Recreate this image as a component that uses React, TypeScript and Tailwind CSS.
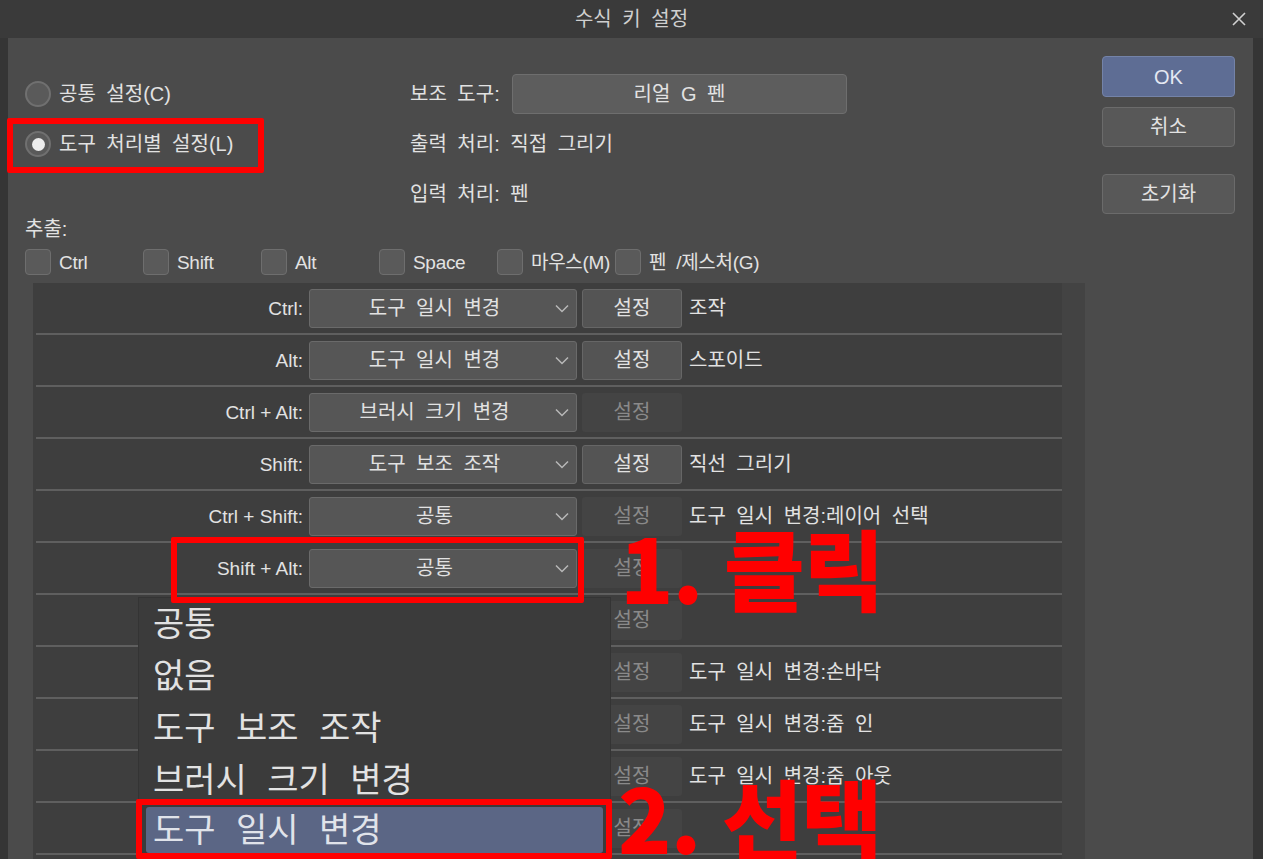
import React from "react";

type Row = { label: string; value: string; enabled: boolean; desc: string };

const rows: Row[] = [
  { label: "Ctrl:", value: "도구 일시 변경", enabled: true, desc: "조작" },
  { label: "Alt:", value: "도구 일시 변경", enabled: true, desc: "스포이드" },
  { label: "Ctrl + Alt:", value: "브러시 크기 변경", enabled: false, desc: "" },
  { label: "Shift:", value: "도구 보조 조작", enabled: true, desc: "직선 그리기" },
  { label: "Ctrl + Shift:", value: "공통", enabled: false, desc: "도구 일시 변경:레이어 선택" },
  { label: "Shift + Alt:", value: "공통", enabled: false, desc: "" },
  { label: "Space:", value: "공통", enabled: false, desc: "" },
  { label: "Ctrl + Space:", value: "도구 일시 변경", enabled: false, desc: "도구 일시 변경:손바닥" },
  { label: "Ctrl + Space:", value: "도구 일시 변경", enabled: false, desc: "도구 일시 변경:줌 인" },
  { label: "Alt + Space:", value: "도구 일시 변경", enabled: false, desc: "도구 일시 변경:줌 아웃" },
  { label: "Shift + Space:", value: "공통", enabled: false, desc: "" },
];

const popupItems = ["공통", "없음", "도구 보조 조작", "브러시 크기 변경", "도구 일시 변경"];

function Chevron() {
  return (
    <svg width="14" height="9" viewBox="0 0 14 9" className="mr-[7px] shrink-0">
      <polyline points="1,1.5 7,7.5 13,1.5" fill="none" stroke="#b8b8b8" strokeWidth="1.5" />
    </svg>
  );
}

function Radio({ label, checked }: { label: string; checked?: boolean }) {
  return (
    <div className="flex items-center gap-[8px] whitespace-nowrap">
      <div className="w-[26px] h-[26px] rounded-full bg-[#5a5a5a] border-2 border-[#707070] flex items-center justify-center">
        {checked && <div className="w-[13px] h-[13px] rounded-full bg-[#ececec]" />}
      </div>
      <span>{label}</span>
    </div>
  );
}

function Check({ label }: { label: string }) {
  return (
    <div className="w-[118px] flex items-center gap-[8px] shrink-0 whitespace-nowrap">
      <div className="w-[26px] h-[26px] shrink-0 rounded-[4px] bg-[#5a5a5a] border border-[#6e6e6e]" />
      <span className="text-[19px] tracking-[-0.3px]">{label}</span>
    </div>
  );
}

function ListRow({ r }: { r: Row }) {
  return (
    <div className="h-[52px] border-b-2 border-[#5f5f5f] flex items-center whitespace-nowrap">
      <div className="w-[267px] text-right text-[19px] [word-spacing:0px]">{r.label}</div>
      <div className="ml-[6px] w-[268px] h-[39px] rounded-[3px] border border-[#6a6a6a] bg-[#565656] flex items-center">
        <span className="flex-1 text-center pl-[4px]">{r.value}</span>
        <Chevron />
      </div>
      {r.enabled ? (
        <div className="ml-[5px] w-[100px] h-[39px] rounded-[3px] border border-[#666666] bg-[#545454] flex items-center justify-center">
          설정
        </div>
      ) : (
        <div className="ml-[5px] w-[100px] h-[39px] rounded-[3px] bg-[#444444] flex items-center justify-center text-[#8a8a8a]">
          설정
        </div>
      )}
      <div className="ml-[7px]">{r.desc}</div>
    </div>
  );
}

export default function App() {
  return (
    <div className="w-[1263px] h-[859px] overflow-hidden relative bg-[#353535] flex flex-col font-['Liberation_Sans','Noto_Sans_CJK_KR',sans-serif] text-[20px] text-[#e2e2e2] [word-spacing:5px] leading-none">
      {/* Title bar */}
      <div className="h-[38px] shrink-0 bg-[#3a3a3a] grid grid-cols-[1fr_auto_1fr] items-center">
        <div />
        <div className="text-[#cfcfcf] text-[20px]">수식 키 설정</div>
        <div className="flex justify-end pr-[16px]">
          <svg width="16" height="16" viewBox="0 0 16 16">
            <path d="M2 2 L14 14 M14 2 L2 14" stroke="#d0d0d0" strokeWidth="1.6" />
          </svg>
        </div>
      </div>

      {/* Body */}
      <div className="flex-1 flex bg-[#4b4b4b] ml-[8px] mr-[10px] min-h-0">
        <div className="w-[1077px] shrink-0 pl-[17px] flex flex-col min-h-0">
          <div className="pt-[31px] grid grid-cols-[385px_1fr] grid-rows-[50px_50px_50px] items-center">
            <Radio label="공통 설정(C)" />
            <div className="flex items-center">
              <span className="w-[102px] whitespace-nowrap">보조 도구:</span>
              <div className="w-[335px] h-[40px] rounded-[4px] border border-[#6e6e6e] bg-[#5d5d5d] flex items-center justify-center">
                리얼 G 펜
              </div>
            </div>
            <Radio checked label="도구 처리별 설정(L)" />
            <div>출력 처리: 직접 그리기</div>
            <div />
            <div>입력 처리: 펜</div>
          </div>
          <div className="h-[20px] flex items-center">추출:</div>
          <div className="mt-[9px] h-[28px] flex items-center">
            <Check label="Ctrl" />
            <Check label="Shift" />
            <Check label="Alt" />
            <Check label="Space" />
            <Check label="마우스(M)" />
            <Check label="펜 /제스처(G)" />
          </div>
          <div className="mt-[7px] ml-[8px] flex-1 bg-[#3e3e3e] flex min-h-0 overflow-hidden">
            <div className="w-[1029px] pl-[3px] flex flex-col">
              {rows.map((r, i) => (
                <ListRow key={i} r={r} />
              ))}
            </div>
            <div className="flex-1 bg-[#434343]" />
          </div>
        </div>
        <div className="pl-[17px] pt-[18px] w-[150px] flex flex-col">
          <div className="h-[41px] rounded-[4px] border border-[#7483a8] bg-[#5e6d94] flex items-center justify-center text-[#e4e8f2]">
            OK
          </div>
          <div className="mt-[10px] h-[40px] rounded-[4px] border border-[#6b6b6b] bg-[#585858] flex items-center justify-center">
            취소
          </div>
          <div className="mt-[27px] h-[40px] rounded-[4px] border border-[#6b6b6b] bg-[#585858] flex items-center justify-center">
            초기화
          </div>
        </div>
      </div>

      {/* Dropdown popup */}
      <div className="absolute left-[138px] top-[597px] w-[473px] h-[270px] bg-[#3b3b3b] border border-[#343434] flex flex-col whitespace-nowrap">
        {popupItems.map((t, i) =>
          i === 4 ? (
            <div key={i} className="h-[52px] pt-[1px] px-[7px]">
              <div className="h-[46px] rounded-[3px] bg-[#5b6685] flex items-center pl-[7px] text-[34px] text-[#e0e3ea] [word-spacing:11px]">
                {t}
              </div>
            </div>
          ) : (
            <div key={i} className="h-[52px] flex items-center pl-[14px] text-[34px] [word-spacing:11px]">
              {t}
            </div>
          )
        )}
      </div>

      {/* Red annotation boxes */}
      <div className="absolute left-[7px] top-[118px] w-[257px] h-[55px] border-[6px] border-[#ff0000] rounded-[2px]" />
      <div className="absolute left-[171px] top-[537px] w-[413px] h-[66px] border-[6px] border-[#ff0000] rounded-[2px]" />
      <div className="absolute left-[136px] top-[799px] w-[476px] h-[60px] border-[6px] border-[#ff0000] rounded-[2px]" />

      {/* Red annotation texts */}
      <div className="absolute left-[620px] top-[522px] text-[#ff0000] text-[88px] font-black leading-none [word-spacing:2px] tracking-[-1px] font-['Noto_Sans_CJK_KR',sans-serif] whitespace-nowrap">
        1. 클릭
      </div>
      <div className="absolute left-[618px] top-[772px] text-[#ff0000] text-[88px] font-black leading-none [word-spacing:2px] tracking-[-1px] font-['Noto_Sans_CJK_KR',sans-serif] whitespace-nowrap">
        2. 선택
      </div>
    </div>
  );
}
